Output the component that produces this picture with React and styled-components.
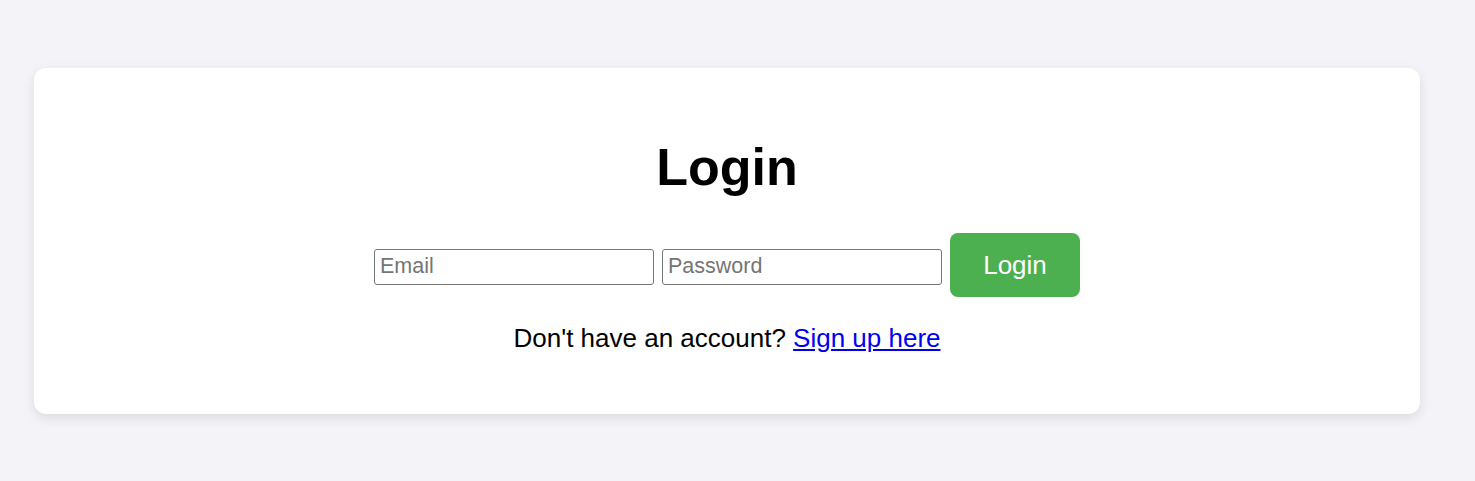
import React from "react";
import styled, { createGlobalStyle } from "styled-components";

const Global = createGlobalStyle`
  html, body {
    margin: 0;
    padding: 0;
    background: #f4f4f8;
    font-family: "Liberation Sans", Arial, sans-serif;
  }
`;

const Page = styled.div`
  padding: 68px 55px 60px 34px;
`;

const Card = styled.div`
  background: #ffffff;
  border-radius: 12px;
  box-shadow: 0 4px 12px rgba(0, 0, 0, 0.1);
  padding: 69px 20px 60px;
  display: flex;
  flex-direction: column;
  align-items: center;
`;

const Title = styled.h1`
  margin: 0 0 36px;
  font-size: 52px;
  font-weight: 700;
  line-height: normal;
  color: #000;
`;

const Form = styled.form`
  display: flex;
  align-items: center;
  gap: 8px;
  margin: 0 0 26px;
`;

const Input = styled.input`
  box-sizing: border-box;
  width: 280px;
  height: 36px;
  margin-top: 3px;
  padding: 0 5px;
  border: 1px solid #767676;
  border-radius: 3px;
  font-family: "Liberation Sans", Arial, sans-serif;
  font-size: 21.5px;
  color: #000;
  background: #fff;
  &::placeholder {
    color: #757575;
  }
`;

const Button = styled.button`
  box-sizing: border-box;
  width: 130px;
  height: 64px;
  border: none;
  border-radius: 8px;
  background: #4caf50;
  color: #fff;
  font-family: "Liberation Sans", Arial, sans-serif;
  font-size: 26px;
  cursor: pointer;
`;

const Text = styled.p`
  margin: 0;
  font-size: 26px;
  line-height: normal;
  color: #000;
`;

const Link = styled.a`
  color: #0000ee;
  text-decoration: underline;
`;

export default function App() {
  return (
    <>
      <Global />
      <Page>
        <Card>
          <Title>Login</Title>
          <Form onSubmit={(e) => e.preventDefault()}>
            <Input type="email" placeholder="Email" />
            <Input type="password" placeholder="Password" />
            <Button type="submit">Login</Button>
          </Form>
          <Text>
            Don't have an account? <Link href="#">Sign up here</Link>
          </Text>
        </Card>
      </Page>
    </>
  );
}
